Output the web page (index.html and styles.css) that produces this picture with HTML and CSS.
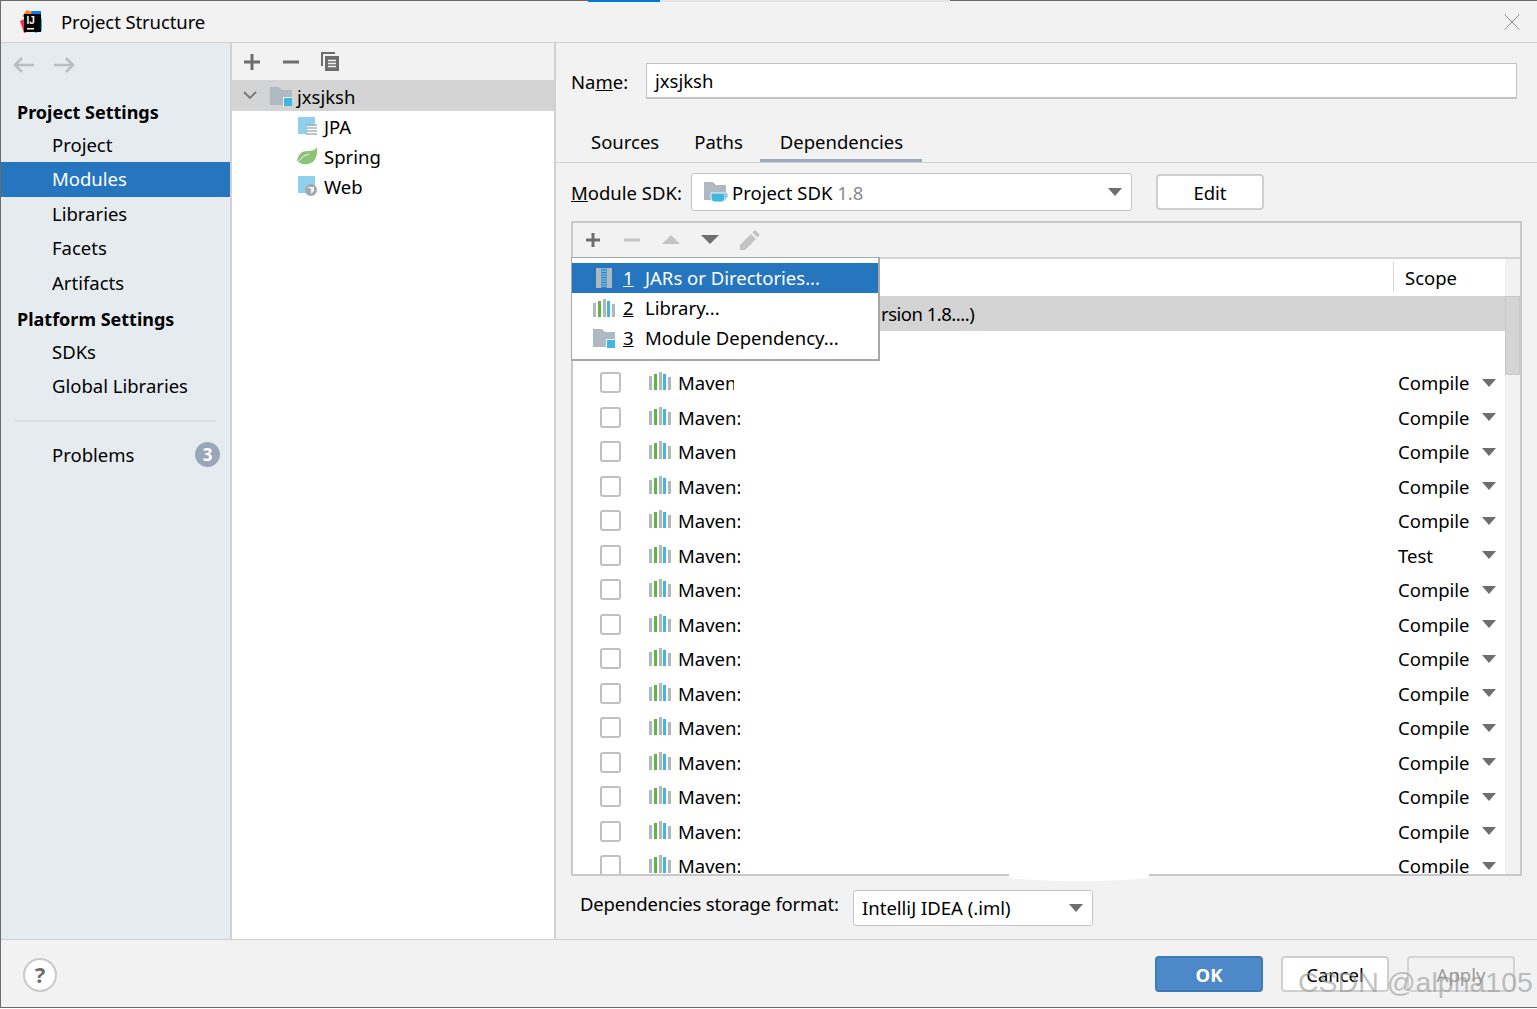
FILE: index.html
```html
<!DOCTYPE html>
<html lang="en">
<head>
<meta charset="utf-8">
<title>Project Structure</title>
<link rel="stylesheet" href="styles.css">
</head>
<body>
<svg class="defs" width="0" height="0" aria-hidden="true">
  <symbol id="lib" viewBox="0 0 22 20">
    <rect x="0" y="5" width="3" height="14" fill="#b0b8bf"/>
    <rect x="5" y="3" width="3" height="16" fill="#62b543"/>
    <rect x="10" y="1" width="3" height="18" fill="#b0b8bf"/>
    <rect x="14" y="3" width="3" height="16" fill="#40b6e0"/>
    <rect x="19" y="6" width="3" height="13" fill="#b0b8bf"/>
  </symbol>
  <symbol id="modfolder" viewBox="0 0 22 20">
    <path d="M0 1h9l3 3h10v15H0z" fill="#afb9c2"/>
    <rect x="13" y="11" width="9" height="9" fill="#f2f2f2"/>
    <rect x="14" y="12" width="8" height="8" fill="#40b6e0"/>
  </symbol>
  <symbol id="caret" viewBox="0 0 14 8">
    <path d="M0 0h14L7 8z" fill="#6e6e6e"/>
  </symbol>
</svg>

<div class="window">
  <div class="taskstrip"><span class="strip-blue"></span><span class="strip-grey"></span></div>

  <header class="titlebar">
    <svg class="logo" width="26" height="26" viewBox="0 0 26 26">
      <path d="M4 7 9 1l7 3-5 9z" fill="#fc801d"/>
      <path d="M2 12l7-3 4 13-7 2z" fill="#fe2857"/>
      <path d="M13 2h10v10l-6 5z" fill="#087cfa"/>
      <path d="M15 18l9-9v13l-7 2z" fill="#07c3f2"/>
      <rect x="6" y="5" width="17" height="18" fill="#000"/>
      <rect x="9" y="19" width="7" height="1.5" fill="#fff"/>
      <text class="logo-text" x="8.500" y="15">IJ</text>
    </svg>
    <span class="title">Project Structure</span>
    <svg class="close" width="16" height="16" viewBox="0 0 16 16"><path d="M0.5 0.5l15 15M15.5 0.5l-15 15" stroke="#8c8c8c" stroke-width="1" fill="none"/></svg>
  </header>

  <div class="main">
    <aside class="sidebar">
      <div class="nav-arrows">
        <svg width="22" height="16" viewBox="0 0 22 16"><path d="M21 8H2M9 1 2 8l7 7" stroke="#b9bec4" stroke-width="2.6" fill="none"/></svg>
        <svg width="22" height="16" viewBox="0 0 22 16"><path d="M1 8h19M13 1l7 7-7 7" stroke="#b9bec4" stroke-width="2.6" fill="none"/></svg>
      </div>
      <div class="nav-head">Project Settings</div>
      <div class="nav-item">Project</div>
      <div class="nav-item selected">Modules</div>
      <div class="nav-item">Libraries</div>
      <div class="nav-item">Facets</div>
      <div class="nav-item">Artifacts</div>
      <div class="nav-head second">Platform Settings</div>
      <div class="nav-item">SDKs</div>
      <div class="nav-item">Global Libraries</div>
      <div class="nav-sep"></div>
      <div class="nav-item problems"><span>Problems</span><span class="badge">3</span></div>
    </aside>

    <section class="tree">
      <div class="tree-tools">
        <svg width="18" height="18" viewBox="0 0 18 18"><path d="M9 1v16M1 9h16" stroke="#6e6e6e" stroke-width="3" fill="none"/></svg>
        <svg width="18" height="18" viewBox="0 0 18 18"><path d="M1 9h16" stroke="#6e6e6e" stroke-width="3" fill="none"/></svg>
        <svg width="19" height="19" viewBox="0 0 19 19"><path d="M1 14V1h13" stroke="#6e6e6e" stroke-width="2" fill="none"/><rect x="4" y="4" width="14" height="15" fill="#6e6e6e"/><path d="M7 8.5h8M7 11.500h8M7 14.500h8" stroke="#f2f2f2" stroke-width="1.300"/></svg>
      </div>
      <div class="tree-row root">
        <svg class="chev" width="14" height="9" viewBox="0 0 14 9"><path d="M1 1l6 6 6-6" stroke="#787878" stroke-width="1.800" fill="none"/></svg>
        <svg class="root-icon" width="22" height="20"><use href="#modfolder"/></svg>
        <span>jxsjksh</span>
      </div>
      <div class="tree-row facet">
        <svg width="22" height="20" viewBox="0 0 22 20"><path d="M2 1h17v9h-8v8H2z" fill="#8fd0ea"/><path d="M10 9h11M10 12h11M10 15h11M10 18h11" stroke="#a9b2ba" stroke-width="1.500"/></svg>
        <span>JPA</span>
      </div>
      <div class="tree-row facet">
        <svg width="22" height="20" viewBox="0 0 22 20"><path d="M21 1c1 9-2 16-9 17-5 1-9-1-11-3C2 9 5 5 11 5c5 0 8-1 10-4z" fill="#8ec47a"/><path d="M2 16c4-5 7-7 11-8" stroke="#f4fbf0" stroke-width="1" fill="none"/></svg>
        <span>Spring</span>
      </div>
      <div class="tree-row facet">
        <svg width="22" height="22" viewBox="0 0 22 22"><path d="M2 1h17v9a8 8 0 0 0-8 8H2z" fill="#8fd0ea"/><circle cx="15" cy="15" r="6" fill="#a0a9b1"/><path d="M11 12l4 2 0 5 3-3 0-4" fill="#f2f2f2"/></svg>
        <span>Web</span>
      </div>
    </section>

    <section class="detail">
      <div class="name-row">
        <label class="lbl">Na<u>m</u>e:</label>
        <div class="name-input">jxsjksh</div>
      </div>
      <nav class="tabs">
        <span class="tab">Sources</span>
        <span class="tab">Paths</span>
        <span class="tab active">Dependencies</span>
      </nav>
      <div class="sdk-row">
        <label class="lbl"><u>M</u>odule SDK:</label>
        <div class="combo sdk-combo">
          <svg width="24" height="22" viewBox="0 0 24 22"><path d="M0 1h9l3 3h10v15H0z" fill="#afb9c2"/><path d="M7 12h14v5a4 4 0 0 1-4 4h-6a4 4 0 0 1-4-4z" fill="#40b6e0" stroke="#f2f2f2"/><path d="M21 13h2v3h-2" stroke="#40b6e0" fill="none"/></svg>
          <span class="combo-text">Project SDK <span class="dim">1.8</span></span>
          <svg class="combo-caret" width="14" height="8"><use href="#caret"/></svg>
        </div>
        <button class="btn edit" type="button">Edit</button>
      </div>

      <div class="table">
        <div class="table-tools">
          <svg width="18" height="18" viewBox="-1 -1 18 18"><path d="M8 1v14M1 8h14" stroke="#6e6e6e" stroke-width="3" fill="none"/></svg>
          <svg width="18" height="18" viewBox="-1 -1 18 18"><path d="M0 8h16" stroke="#c4c4c4" stroke-width="3" fill="none"/></svg>
          <svg width="18" height="18" viewBox="0 -4 18 18"><path d="M0 9h18L9 0z" fill="#c4c4c4"/></svg>
          <svg width="18" height="18" viewBox="0 -4 18 18"><path d="M0 0h18L9 9z" fill="#6e6e6e"/></svg>
          <svg class="pencil" width="20" height="20" viewBox="0 0 20 20"><path d="M0 20v-5L11 4l5 5L5 20zM12.500 2.500 15 0l5 5-2.500 2.500z" fill="#c4c4c4"/></svg>
        </div>
        <div class="table-body">
          <div class="rows">
            <div class="table-head"><span class="scope-head">Scope</span></div>
            <div class="jdk-row"><span class="jdk-text">rsion 1.8....)</span></div>
            <div class="blank-row"></div>
            <div class="dep-row"><span class="check"></span><svg class="lib" width="22" height="20"><use href="#lib"/></svg><span class="dep-name clip-a">Maven:</span><span class="scope">Compile</span><svg class="scope-caret" width="14" height="8"><use href="#caret"/></svg></div>
            <div class="dep-row"><span class="check"></span><svg class="lib" width="22" height="20"><use href="#lib"/></svg><span class="dep-name">Maven:</span><span class="scope">Compile</span><svg class="scope-caret" width="14" height="8"><use href="#caret"/></svg></div>
            <div class="dep-row"><span class="check"></span><svg class="lib" width="22" height="20"><use href="#lib"/></svg><span class="dep-name clip-b">Maven:</span><span class="scope">Compile</span><svg class="scope-caret" width="14" height="8"><use href="#caret"/></svg></div>
            <div class="dep-row"><span class="check"></span><svg class="lib" width="22" height="20"><use href="#lib"/></svg><span class="dep-name">Maven:</span><span class="scope">Compile</span><svg class="scope-caret" width="14" height="8"><use href="#caret"/></svg></div>
            <div class="dep-row"><span class="check"></span><svg class="lib" width="22" height="20"><use href="#lib"/></svg><span class="dep-name">Maven:</span><span class="scope">Compile</span><svg class="scope-caret" width="14" height="8"><use href="#caret"/></svg></div>
            <div class="dep-row"><span class="check"></span><svg class="lib" width="22" height="20"><use href="#lib"/></svg><span class="dep-name">Maven:</span><span class="scope">Test</span><svg class="scope-caret" width="14" height="8"><use href="#caret"/></svg></div>
            <div class="dep-row"><span class="check"></span><svg class="lib" width="22" height="20"><use href="#lib"/></svg><span class="dep-name">Maven:</span><span class="scope">Compile</span><svg class="scope-caret" width="14" height="8"><use href="#caret"/></svg></div>
            <div class="dep-row"><span class="check"></span><svg class="lib" width="22" height="20"><use href="#lib"/></svg><span class="dep-name">Maven:</span><span class="scope">Compile</span><svg class="scope-caret" width="14" height="8"><use href="#caret"/></svg></div>
            <div class="dep-row"><span class="check"></span><svg class="lib" width="22" height="20"><use href="#lib"/></svg><span class="dep-name">Maven:</span><span class="scope">Compile</span><svg class="scope-caret" width="14" height="8"><use href="#caret"/></svg></div>
            <div class="dep-row"><span class="check"></span><svg class="lib" width="22" height="20"><use href="#lib"/></svg><span class="dep-name">Maven:</span><span class="scope">Compile</span><svg class="scope-caret" width="14" height="8"><use href="#caret"/></svg></div>
            <div class="dep-row"><span class="check"></span><svg class="lib" width="22" height="20"><use href="#lib"/></svg><span class="dep-name">Maven:</span><span class="scope">Compile</span><svg class="scope-caret" width="14" height="8"><use href="#caret"/></svg></div>
            <div class="dep-row"><span class="check"></span><svg class="lib" width="22" height="20"><use href="#lib"/></svg><span class="dep-name">Maven:</span><span class="scope">Compile</span><svg class="scope-caret" width="14" height="8"><use href="#caret"/></svg></div>
            <div class="dep-row"><span class="check"></span><svg class="lib" width="22" height="20"><use href="#lib"/></svg><span class="dep-name">Maven:</span><span class="scope">Compile</span><svg class="scope-caret" width="14" height="8"><use href="#caret"/></svg></div>
            <div class="dep-row"><span class="check"></span><svg class="lib" width="22" height="20"><use href="#lib"/></svg><span class="dep-name">Maven:</span><span class="scope">Compile</span><svg class="scope-caret" width="14" height="8"><use href="#caret"/></svg></div>
            <div class="dep-row"><span class="check"></span><svg class="lib" width="22" height="20"><use href="#lib"/></svg><span class="dep-name">Maven:</span><span class="scope">Compile</span><svg class="scope-caret" width="14" height="8"><use href="#caret"/></svg></div>
          </div>
          <div class="scrollbar"><div class="scroll-top"></div><div class="scroll-thumb"></div></div>
        </div>

        <div class="popup">
          <div class="popup-item selected">
            <svg class="pop-icon" width="16" height="20" viewBox="0 0 16 20"><rect width="16" height="20" fill="#afb9c2"/><rect x="5.500" width="5" height="20" fill="#2675bf"/><path d="M8 0v20" stroke="#6fc0e6" stroke-width="4" stroke-dasharray="1.500 1"/></svg>
            <span class="pop-num">1</span><span>JARs or Directories...</span>
          </div>
          <div class="popup-item">
            <svg class="pop-icon" width="22" height="20"><use href="#lib"/></svg>
            <span class="pop-num">2</span><span>Library...</span>
          </div>
          <div class="popup-item">
            <svg class="pop-icon" width="22" height="20"><use href="#modfolder"/></svg>
            <span class="pop-num">3</span><span>Module Dependency...</span>
          </div>
        </div>
      </div>

      <div class="format-row">
        <span class="format-label">Dependencies storage format:</span>
        <div class="combo format-combo">
          <span class="combo-text">IntelliJ IDEA (.iml)</span>
          <svg class="combo-caret" width="14" height="8"><use href="#caret"/></svg>
        </div>
      </div>
    </section>
  </div>

  <footer class="footer">
    <span class="help">?</span>
    <div class="actions">
      <button class="btn ok" type="button">OK</button>
      <button class="btn" type="button">Cancel</button>
      <button class="btn disabled" type="button">Apply</button>
    </div>
  </footer>

  <div class="erase"></div>
  <div class="watermark">CSDN @alpha105</div>
</div>
</body>
</html>
```
FILE: styles.css
```css
* { box-sizing: border-box; }
html, body { margin: 0; padding: 0; background: #fff; }
body { font-family: "Noto Sans", "Noto Sans CJK SC", sans-serif; font-size: 18.5px; color: #000; }
.defs { position: absolute; }

.window { position: relative; width: 1537px; height: 1008px; border-top: 1px solid #6b6b6b; border-left: 1px solid #6b6b6b; border-bottom: 1px solid #6b6b6b; background: #f2f2f2; display: flex; flex-direction: column; }
.taskstrip { position: absolute; top: -1px; left: 587px; display: flex; height: 2px; }
.strip-blue { width: 72px; background: #0078d7; }
.strip-grey { width: 290px; background: #e4e4e4; }

.titlebar { height: 42px; flex: none; display: flex; align-items: center; padding: 0 17px; border-bottom: 1px solid #d1d1d1; }
.logo { margin-right: 17px; }
.logo-text { font-family: "Liberation Sans", sans-serif; font-size: 10px; font-weight: 700; fill: #fff; }
.title { line-height: 42px; letter-spacing: -0.1px; }
.close { margin-left: auto; }

.main { flex: 1; display: flex; min-height: 0; }

.sidebar { width: 231px; flex: none; background: #e6ebf0; border-right: 2px solid #d1d1d1; }
.nav-arrows { height: 51px; display: flex; gap: 18px; padding: 14px 0 0 12px; align-items: flex-start; }
.nav-head { height: 34px; line-height: 36px; padding-left: 16px; font-weight: 700; font-size: 18px; }
.nav-head.second { margin-top: 2px; height: 33px; line-height: 34px; }
.nav-item { height: 34.4px; line-height: 34.4px; padding-left: 51px; }
.nav-item.selected { background: #2675bf; color: #fff; width: 229px; }
.nav-sep { height: 2px; margin: 16px 14px 16px 14px; background: #dcdfe3; }
.problems { display: flex; justify-content: space-between; align-items: center; padding-right: 10px; }
.badge { width: 25px; height: 25px; border-radius: 50%; background: #9aa7b8; color: #fff; font-weight: 700; font-size: 17px; line-height: 25px; text-align: center; }

.tree { width: 324px; flex: none; background: #fff; border-right: 2px solid #d1d1d1; }
.tree-tools { height: 37px; background: #f2f2f2; display: flex; align-items: center; gap: 21px; padding: 0 0 0 11px; }
.tree-row { height: 30px; display: flex; align-items: center; line-height: 30px; }
.tree-row span { margin-top: 2px; }
.tree-row.root { height: 31px; background: #d4d4d4; padding-left: 11px; }
.chev { margin-right: 13px; }
.root-icon { margin-right: 5px; }
.facet { padding-left: 64px; gap: 6px; }

.detail { flex: 1; min-width: 0; padding-left: 15px; display: flex; flex-direction: column; }
.lbl { white-space: nowrap; }
.name-row { display: flex; align-items: center; height: 36px; margin-top: 20px; }
.name-row .lbl { width: 75px; }
.name-input { width: 871px; height: 36px; background: #fff; border: 1px solid #c4c4c4; border-bottom-width: 2px; padding-left: 8px; line-height: 33px; }

.tabs { height: 49px; margin-top: 15px; margin-left: -15px; border-bottom: 1px solid #d1d1d1; display: flex; padding-left: 15px; align-items: flex-end; }
.tab { padding: 0 20px; height: 48px; line-height: 55px; margin-right: -5px; }
.tab.active { width: 162px; margin-left: 2px; border-bottom: 3px solid #9fabbc; }

.sdk-row { display: flex; align-items: center; margin-top: 10px; height: 38px; }
.sdk-row .lbl { width: 120px; }
.combo { position: relative; display: flex; align-items: center; background: #fff; border: 1px solid #c4c4c4; border-radius: 3px; }
.sdk-combo { width: 441px; height: 38px; padding-left: 12px; gap: 4px; }
.combo-caret { position: absolute; right: 9px; top: 50%; margin-top: -4px; }
.dim { color: #8c8c8c; }

.btn { font: inherit; color: #000; width: 108px; height: 36px; background: #fff; border: 2px solid #cfcfcf; border-radius: 4px; padding: 0; }
.btn.edit { margin-left: 24px; }
.btn.ok { background: #4d88c8; border-color: #3f7ab8; color: #fff; font-weight: 700; }
.btn.disabled { background: #f2f2f2; color: #9a9a9a; border-color: #d4d4d4; }

.table { position: relative; width: 951px; height: 655px; margin-top: 10px; border: 2px solid #c9c9c9; background: #fff; display: flex; flex-direction: column; }
.table-tools { height: 36px; flex: none; background: #f2f2f2; border-bottom: 2px solid #d4d4d4; display: flex; align-items: center; gap: 21px; padding-left: 11px; }
.table-body { flex: 1; display: flex; min-height: 0; overflow: hidden; }
.rows { flex: 1; min-width: 0; }
.table-head { height: 37px; position: relative; background: #fff; }
.scope-head { position: absolute; left: 820px; top: 3px; bottom: 5px; border-left: 1px solid #d4d4d4; padding-left: 11px; line-height: 32px; }
.jdk-row { height: 35px; background: #d4d4d4; padding-left: 308px; line-height: 35px; letter-spacing: -0.5px; }
.blank-row { height: 34.6px; }
.dep-row { height: 34.5px; display: flex; align-items: center; position: relative; }
.check { width: 21px; height: 21px; margin-left: 27px; background: #fff; border: 2px solid #c0c0c0; border-radius: 3px; flex: none; }
.lib { margin-left: 28px; margin-top: -3px; flex: none; }
.dep-name { margin-left: 7px; width: 62px; overflow: hidden; white-space: nowrap; }
.dep-name.clip-a { width: 56px; }
.dep-name.clip-b { width: 59px; }
.scope { position: absolute; left: 825px; }
.scope-caret { position: absolute; left: 909px; top: 50%; margin-top: -4px; }

.scrollbar { width: 15px; flex: none; background: #f2f2f2; }
.scroll-top { height: 37px; }
.scroll-thumb { height: 79px; background: #d4d4d4; border: 1px solid #c8c8c8; }

.popup { position: absolute; left: -2px; top: 34px; width: 309px; height: 104px; padding: 5px 0 0 0; background: #fff; border: 1px solid #a8a8a8; border-right-width: 2px; border-bottom-width: 2px; }
.popup-item { height: 30px; line-height: 30px; display: flex; align-items: center; position: relative; padding-left: 51px; white-space: nowrap; }
.popup-item.selected { background: #2675bf; color: #fff; }
.pop-icon { position: absolute; left: 21px; top: 5px; }
.popup-item.selected .pop-icon { left: 24px; }
.pop-num { width: 22px; text-decoration: underline; }

.format-row { display: flex; align-items: center; margin-top: 13px; padding-left: 9px; height: 37px; }
.format-label { width: 273px; margin-top: -8px; white-space: nowrap; letter-spacing: -0.18px; }
.format-combo { width: 240px; height: 36px; padding-left: 8px; }

.footer { height: 68px; flex: none; border-top: 1px solid #d1d1d1; display: flex; align-items: center; justify-content: space-between; padding: 0 22px; }
.help { width: 34px; height: 34px; margin-top: 3px; border-radius: 50%; background: #fff; border: 2px solid #c9c9c9; color: #6e6e6e; font-weight: 700; font-size: 22px; line-height: 29px; text-align: center; }
.actions { display: flex; gap: 18px; margin-top: 1px; }

.erase { position: absolute; left: 1008px; top: 872px; width: 140px; height: 8px; background: #fff; border-radius: 0 0 50% 50%; }
.watermark { position: absolute; left: 1297px; top: 963px; font-family: "Liberation Sans", sans-serif; font-size: 28.5px; color: rgba(150,150,150,0.6); white-space: nowrap; line-height: 36px; }
```
